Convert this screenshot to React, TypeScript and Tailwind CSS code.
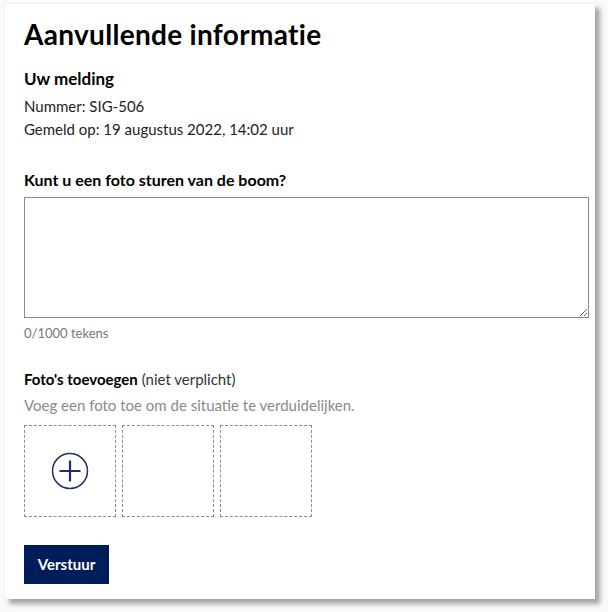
import React, { useState } from "react";

export default function App() {
  const [text, setText] = useState("");

  return (
    <div className="w-[608px] h-[612px] bg-[#fafafa] pt-[3px] pl-[4px] font-['Lato',sans-serif]">
      <div className="w-[591px] h-[596px] bg-white border-l border-t border-[#f0f0f0] shadow-[5px_5px_5px_rgba(0,0,0,0.35)] pl-[19px] pr-[6px] pt-[12px]">
        {/* Header */}
        <h1 className="text-[28px] leading-[36px] font-bold text-black tracking-[0.3px]">
          Aanvullende informatie
        </h1>

        {/* Melding info */}
        <div className="mt-[16px]">
          <h2 className="text-[17px] leading-[22px] font-bold text-black">Uw melding</h2>
          <p className="mt-[5px] text-[15px] leading-[23px] text-[#222]">Nummer: SIG-506</p>
          <p className="text-[15px] leading-[23px] text-[#222]">
            Gemeld op: 19 augustus 2022, 14:02 uur
          </p>
        </div>

        {/* Question */}
        <div className="mt-[28px]">
          <label className="block text-[16px] leading-[22px] font-bold text-black">
            Kunt u een foto sturen van de boom?
          </label>
          <textarea
            value={text}
            onChange={(e) => setText(e.target.value)}
            className="mt-[6px] block w-[565px] h-[121px] border border-[#8c8c8c] bg-white resize-y focus:outline-none"
          />
          <p className="mt-[6px] text-[13px] leading-[18px] text-[#777]">
            {text.length}/1000 tekens
          </p>
        </div>

        {/* Photos */}
        <div className="mt-[26px]">
          <p className="text-[15px] leading-[22px] text-black">
            <span className="font-bold">Foto's toevoegen</span>{" "}
            <span className="text-[#333]">(niet verplicht)</span>
          </p>
          <p className="mt-[4px] text-[15px] leading-[22px] text-[#8a8a8a]">
            Voeg een foto toe om de situatie te verduidelijken.
          </p>
          <div className="mt-[9px] flex gap-[6px]">
            <button className="w-[92px] h-[92px] border border-dashed border-[#8c8c8c] flex items-center justify-center">
              <svg width="38" height="38" viewBox="0 0 38 38" fill="none">
                <circle cx="19" cy="19" r="17.5" stroke="#1f2f6b" strokeWidth="1.5" />
                <path d="M19 8.5v21M8.5 19h21" stroke="#1f2f6b" strokeWidth="2.2" />
              </svg>
            </button>
            <div className="w-[92px] h-[92px] border border-dashed border-[#8c8c8c]" />
            <div className="w-[92px] h-[92px] border border-dashed border-[#8c8c8c]" />
          </div>
        </div>

        <button className="mt-[28px] w-[85px] h-[39px] bg-[#001d5b] text-white text-[15px] font-bold">
          Verstuur
        </button>
      </div>
    </div>
  );
}
